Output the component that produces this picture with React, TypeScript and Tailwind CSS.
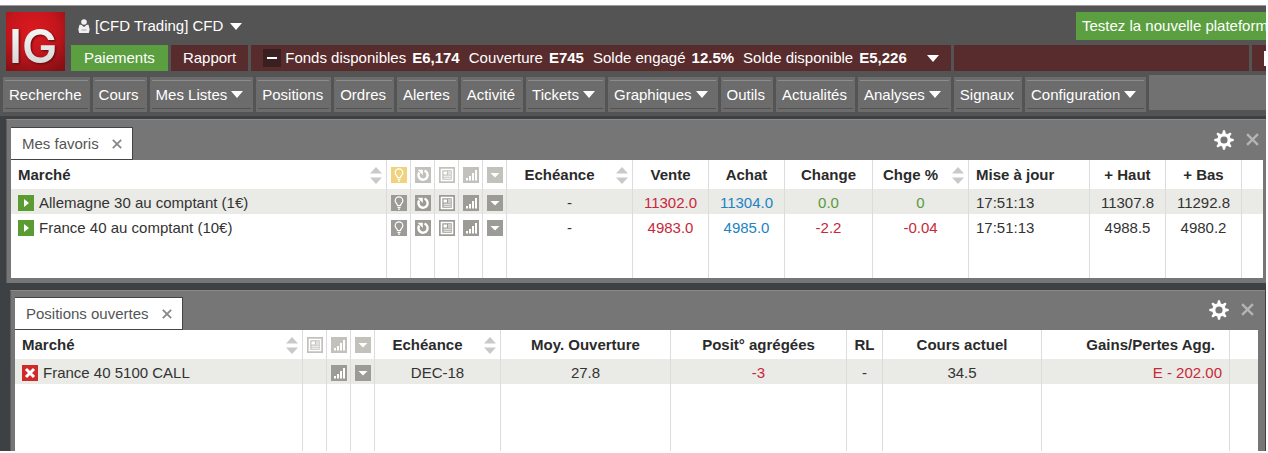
import type { ReactNode } from "react";
import clsx from "clsx";

type IconName = "bulb" | "alarm" | "news" | "chart" | "menu";

type Column = {
  key: string;
  width: string;
  label?: string;
  icon?: IconName;
  title?: string;
  sortable?: boolean;
  highlight?: boolean;
  align?: "left" | "right";
};

type Cell = { text: string; color?: string };

type Row = {
  name: string;
  status: "open" | "close";
  icons: IconName[];
  cells: Record<string, Cell>;
};

const RED = "text-[#c8283a]";
const BLUE = "text-[#1b84c4]";
const GREEN = "text-[#5b9a3b]";

const NAV = [
  { label: "Recherche" },
  { label: "Cours" },
  { label: "Mes Listes", menu: true },
  { label: "Positions" },
  { label: "Ordres" },
  { label: "Alertes" },
  { label: "Activité" },
  { label: "Tickets", menu: true },
  { label: "Graphiques", menu: true },
  { label: "Outils" },
  { label: "Actualités" },
  { label: "Analyses", menu: true },
  { label: "Signaux" },
  { label: "Configuration", menu: true },
];

const BALANCES = [
  { label: "Fonds disponibles", value: "E6,174" },
  { label: "Couverture", value: "E745" },
  { label: "Solde engagé", value: "12.5%" },
  { label: "Solde disponible", value: "E5,226" },
];

const FAVORITE_COLUMNS: Column[] = [
  { key: "name", width: "w-[376px]", label: "Marché", sortable: true, align: "left" },
  { key: "bulb", width: "w-6", icon: "bulb", title: "Signaux", highlight: true },
  { key: "alarm", width: "w-6", icon: "alarm", title: "Alertes" },
  { key: "news", width: "w-6", icon: "news", title: "Actualités" },
  { key: "chart", width: "w-6", icon: "chart", title: "Graphique" },
  { key: "menu", width: "w-6", icon: "menu", title: "Menu" },
  { key: "expiry", width: "w-[126px]", label: "Echéance", sortable: true },
  { key: "sell", width: "w-[76px]", label: "Vente" },
  { key: "buy", width: "w-[76px]", label: "Achat" },
  { key: "change", width: "w-[88px]", label: "Change" },
  { key: "percent", width: "w-24", label: "Chge %", sortable: true },
  { key: "updated", width: "w-[121px]", label: "Mise à jour", align: "left" },
  { key: "high", width: "w-[76px]", label: "+ Haut" },
  { key: "low", width: "w-[76px]", label: "+ Bas" },
  { key: "rest", width: "w-auto" },
];

const FAVORITES: Row[] = [
  {
    name: "Allemagne 30 au comptant (1€)",
    status: "open",
    icons: ["bulb", "alarm", "news", "chart", "menu"],
    cells: {
      expiry: { text: "-" },
      sell: { text: "11302.0", color: RED },
      buy: { text: "11304.0", color: BLUE },
      change: { text: "0.0", color: GREEN },
      percent: { text: "0", color: GREEN },
      updated: { text: "17:51:13" },
      high: { text: "11307.8" },
      low: { text: "11292.8" },
    },
  },
  {
    name: "France 40 au comptant (10€)",
    status: "open",
    icons: ["bulb", "alarm", "news", "chart", "menu"],
    cells: {
      expiry: { text: "-" },
      sell: { text: "4983.0", color: RED },
      buy: { text: "4985.0", color: BLUE },
      change: { text: "-2.2", color: RED },
      percent: { text: "-0.04", color: RED },
      updated: { text: "17:51:13" },
      high: { text: "4988.5" },
      low: { text: "4980.2" },
    },
  },
];

const POSITION_COLUMNS: Column[] = [
  { key: "name", width: "w-72", label: "Marché", sortable: true, align: "left" },
  { key: "news", width: "w-6", icon: "news", title: "Actualités" },
  { key: "chart", width: "w-6", icon: "chart", title: "Graphique" },
  { key: "menu", width: "w-6", icon: "menu", title: "Menu" },
  { key: "expiry", width: "w-[126px]", label: "Echéance", sortable: true },
  { key: "average", width: "w-[170px]", label: "Moy. Ouverture" },
  { key: "size", width: "w-44", label: "Posit° agrégées" },
  { key: "limit", width: "w-9", label: "RL" },
  { key: "price", width: "w-[159px]", label: "Cours actuel" },
  { key: "profit", width: "w-[188px]", label: "Gains/Pertes Agg.", align: "right" },
  { key: "rest", width: "w-auto" },
];

const POSITIONS: Row[] = [
  {
    name: "France 40 5100 CALL",
    status: "close",
    icons: ["chart", "menu"],
    cells: {
      expiry: { text: "DEC-18" },
      average: { text: "27.8" },
      size: { text: "-3", color: RED },
      limit: { text: "-" },
      price: { text: "34.5" },
      profit: { text: "E - 202.00", color: RED },
    },
  },
];

function Caret() {
  return (
    <svg width="12" height="7" viewBox="0 0 12 7" className="shrink-0" aria-hidden="true">
      <path d="M0 0h12L6 7z" fill="#fff" />
    </svg>
  );
}

function Logo() {
  return (
    <svg
      width="59"
      height="59"
      viewBox="0 0 59 59"
      className="shrink-0 overflow-visible"
      role="img"
      aria-label="IG"
    >
      <defs>
        <radialGradient id="logo-red" cx="0.45" cy="0.3" r="0.8">
          <stop offset="0" stopColor="#dc191f" />
          <stop offset="0.5" stopColor="#c5161d" />
          <stop offset="1" stopColor="#860f14" />
        </radialGradient>
        <linearGradient id="logo-silver" x1="0" y1="0" x2="0" y2="1">
          <stop offset="0" stopColor="#ffffff" />
          <stop offset="1" stopColor="#cfcfcf" />
        </linearGradient>
      </defs>
      <rect width="59" height="59" fill="url(#logo-red)" />
      <text
        x="3"
        y="51"
        fontFamily="Inter, sans-serif"
        fontSize="47"
        fontWeight="600"
        fill="url(#logo-silver)"
        className="drop-shadow-[1px_1px_1px_#5a0a0d]"
      >
        IG
      </text>
    </svg>
  );
}

function UserIcon() {
  return (
    <svg width="12" height="14" viewBox="0 0 12 14" className="shrink-0" aria-hidden="true">
      <circle cx="6" cy="3" r="2.8" fill="#f0f0f0" />
      <path d="M1.500 5.800h1.700L6 8l2.800-2.200h1.700L11.700 10.500 10.800 14H1.200L0.300 10.500z" fill="#f0f0f0" />
      <path d="M3.500 11h5" stroke="#a5a5a5" />
    </svg>
  );
}

function GearIcon() {
  return (
    <svg width="20" height="20" viewBox="0 0 20 20" aria-hidden="true">
      <circle cx="10" cy="10" r="5.2" fill="none" stroke="#fff" strokeWidth="3.2" />
      {[0, 45, 90, 135, 180, 225, 270, 315].map((angle) => (
        <path key={angle} d="M8 4.500L9 0.300h2L12 4.500z" fill="#fff" transform={`rotate(${angle} 10 10)`} />
      ))}
    </svg>
  );
}

function CrossIcon({ size, color }: { size: number; color: string }) {
  return (
    <svg width={size} height={size} viewBox="0 0 12 12" aria-hidden="true">
      <path d="M1 1l10 10M11 1L1 11" stroke={color} strokeWidth="2.2" />
    </svg>
  );
}

function SortIcon() {
  return (
    <svg width="12" height="17" viewBox="0 0 12 17" aria-hidden="true">
      <path d="M6 0l6 6.500H0zM0 10.500h12L6 17z" fill="#c9c9c9" />
    </svg>
  );
}

const GLYPHS: Record<IconName, ReactNode> = {
  bulb: (
    <g fill="none" stroke="#fff" strokeWidth="1.2">
      <path d="M6.500 10.500C6.500 8.500 4.200 8 4.200 5.700a3.800 3.800 0 0 1 7.600 0C11.800 8 9.500 8.500 9.500 10.500z" />
      <path d="M6.500 12.300h3M7 14.200h2" />
    </g>
  ),
  alarm: (
    <g>
      <path d="M9.500 3.700A4.600 4.600 0 1 1 4.200 5.500" fill="none" stroke="#fff" strokeWidth="2.4" />
      <path d="M2.500 2.800h5.300v5.200z" fill="#fff" />
    </g>
  ),
  news: (
    <g>
      <path d="M2.500 2.500h11v11h-11z" fill="none" stroke="#fff" strokeWidth="1.6" />
      <path d="M4.500 4.500h3.500v3H4.500z" fill="#fff" />
      <path d="M9 5h3M9 7h3M4.500 9.200h7.500M4.500 11.200h7.500" stroke="#fff" />
    </g>
  ),
  chart: (
    <path d="M3 11h2v2.500H3zM6 9h2v4.500H6zM9 6h2v7.500H9zM12 3h2v10.500h-2z" fill="#fff" />
  ),
  menu: <path d="M3.500 6h9L8 10.500z" fill="#fff" />,
};

function Tile({ icon, color }: { icon: IconName; color: string }) {
  return (
    <svg width="16" height="16" viewBox="0 0 16 16" className="block" aria-hidden="true">
      <rect width="16" height="16" fill={color} />
      {GLYPHS[icon]}
    </svg>
  );
}

function StatusIcon({ status }: { status: Row["status"] }) {
  return (
    <svg width="16" height="16" viewBox="0 0 16 16" className="shrink-0" aria-hidden="true">
      <rect width="16" height="16" fill={status === "open" ? "#5b9c32" : "#cf2a2a"} />
      {status === "open" ? (
        <path d="M6 4l5 4-5 4z" fill="#fff" />
      ) : (
        <path d="M4 4l8 8M12 4l-8 8" stroke="#fff" strokeWidth="3" />
      )}
    </svg>
  );
}

function MarketTable({
  label,
  columns,
  rows,
  filler,
}: {
  label: string;
  columns: Column[];
  rows: Row[];
  filler: string;
}) {
  return (
    <table aria-label={label} className="w-full table-fixed border-separate border-spacing-0 bg-white">
      <thead>
        <tr className="h-[29px]">
          {columns.map((col) => (
            <th
              key={col.key}
              className={clsx(
                "p-0 font-bold text-[#2b2b2b]",
                col.width,
                col.key !== "rest" && "border-r border-[#dcdcdc]",
              )}
            >
              {col.icon && (
                <button type="button" aria-label={col.title} className="ml-1 block pt-px">
                  <Tile icon={col.icon} color={col.highlight ? "#efd37f" : "#c2c1bc"} />
                </button>
              )}
              {col.label && (
                <div
                  className={clsx(
                    "flex items-center",
                    col.align === "right" && "justify-end pr-3.5",
                    !col.align && !col.sortable && "justify-center",
                    col.align === "left" && "pl-[7px]",
                  )}
                >
                  <span className={clsx(col.sortable && "flex-1", col.align === "left" ? "text-left" : "text-center")}>
                    {col.label}
                  </span>
                  {col.sortable && (
                    <button type="button" aria-label={`Trier par ${col.label}`} className="mr-1 pl-1 pt-0.5">
                      <SortIcon />
                    </button>
                  )}
                </div>
              )}
            </th>
          ))}
        </tr>
      </thead>
      <tbody>
        {rows.map((row) => (
          <tr key={row.name} className="h-[25px] text-[#333] odd:bg-[#eaeae6]">
            {columns.map((col) => {
              const cell = row.cells[col.key];
              return (
                <td
                  key={col.key}
                  className={clsx(
                    "px-0 pt-0.5 pb-0",
                    col.key !== "rest" && "border-r border-[#dcdcdc]",
                    !col.align && "text-center",
                    col.align === "left" && "pl-[7px]",
                    col.align === "right" && "pr-[7px] text-right",
                    cell?.color,
                  )}
                >
                  {col.key === "name" && (
                    <div className="flex items-center gap-[5px]">
                      <StatusIcon status={row.status} />
                      {row.name}
                    </div>
                  )}
                  {col.icon && row.icons.includes(col.icon) && (
                    <button type="button" aria-label={`${col.title} ${row.name}`} className="ml-1 block">
                      <Tile icon={col.icon} color="#9d9b95" />
                    </button>
                  )}
                  {cell?.text}
                </td>
              );
            })}
          </tr>
        ))}
        <tr className={filler} aria-hidden="true">
          {columns.map((col) => (
            <td key={col.key} className={clsx("p-0", col.key !== "rest" && "border-r border-[#dcdcdc]")} />
          ))}
        </tr>
      </tbody>
    </table>
  );
}

function Panel({ title, className, children }: { title: string; className: string; children: ReactNode }) {
  return (
    <section className={clsx("border-t border-l border-t-[#8a8a8a] border-l-[#5c5c5c] bg-[#767676]", className)}>
      <div className="flex items-center">
        <div className="flex h-[33px] items-center gap-[13px] border-y border-r border-[#444] bg-white pr-2.5 pl-[11px] text-[#555]">
          <h2>{title}</h2>
          <button type="button" aria-label={`Fermer ${title}`}>
            <CrossIcon size={10} color="#888" />
          </button>
        </div>
        <div className="mb-2 ml-auto flex items-center gap-3 pr-1">
          <button type="button" aria-label={`Réglages ${title}`}>
            <GearIcon />
          </button>
          <button type="button" aria-label={`Fermer le panneau ${title}`}>
            <CrossIcon size={13} color="#b4b4b4" />
          </button>
        </div>
      </div>
      {children}
    </section>
  );
}

export default function App() {
  return (
    <div className="overflow-hidden bg-white pt-[5px] pr-0.5 pb-0.5 font-['Liberation_Sans',Arial,sans-serif] text-[15px] leading-5">
      <div className="border-t border-[#999] bg-[#3d4143]">
        <header className="bg-[#545454] pb-1">
          <div className="flex gap-1.5 pt-1.5 pb-1 pl-1.5">
            <Logo />
            <div className="flex min-w-0 flex-1 flex-col gap-[5px] text-white">
              <div className="flex h-7 items-center">
                <button type="button" className="flex items-center gap-[5px] pl-[7px]">
                  <UserIcon />
                  <span>[CFD Trading] CFD</span>
                  <span className="pl-0.5">
                    <Caret />
                  </span>
                </button>
                <a
                  href="#plateforme"
                  className="ml-auto flex h-7 w-[190px] shrink-0 items-center overflow-hidden bg-[#5c9f41] pl-1.5 whitespace-nowrap"
                >
                  Testez la nouvelle plateforme
                </a>
              </div>
              <div className="flex h-[26px] gap-[3px]">
                <button type="button" className="bg-[#5c9f41] px-[13px]">
                  Paiements
                </button>
                <button type="button" className="bg-[#582c2d] px-3">
                  Rapport
                </button>
                <div className="flex items-center bg-[#582c2d] px-3">
                  <button
                    type="button"
                    aria-label="Réduire"
                    className="mr-1 flex size-[18px] items-center justify-center bg-[#3a1f20]"
                  >
                    <span className="h-0.5 w-2.5 bg-white" />
                  </button>
                  <dl className="flex gap-[9px] whitespace-nowrap">
                    {BALANCES.map((item) => (
                      <div key={item.label} className="flex gap-1.5">
                        <dt>{item.label}</dt>
                        <dd className="font-bold">{item.value}</dd>
                      </div>
                    ))}
                  </dl>
                  <button type="button" aria-label="Détails du solde" className="ml-5">
                    <Caret />
                  </button>
                </div>
                <div className="flex-1 bg-[#582c2d]" />
                <div className="flex w-3.5 items-center justify-end bg-[#582c2d]">
                  <span className="h-[15px] w-0.5 bg-white" />
                </div>
              </div>
            </div>
          </div>
          <nav className="flex gap-[3px] pl-[3px]">
            {NAV.map((item) => (
              <button
                key={item.label}
                type="button"
                className="mt-0.5 h-[35px] bg-[#6c6c6c] px-0.5 py-[3px] text-white"
              >
                <span
                  className={clsx(
                    "flex h-full items-center border-t border-b border-t-[#8c8c8c] border-b-[#525252] pl-1 whitespace-nowrap",
                    item.menu ? "gap-1 pr-2" : "pr-1.5",
                  )}
                >
                  {item.label}
                  {item.menu && <Caret />}
                </span>
              </button>
            ))}
            <div className="mb-0.5 flex-1 bg-[#717171]" />
          </nav>
        </header>
        <main className="flex flex-col gap-[7px] pt-[3px]">
          <Panel title="Mes favoris" className="ml-1.5 pt-[7px] pr-[3px] pb-[5px] pl-1">
            <MarketTable label="Mes favoris" columns={FAVORITE_COLUMNS} rows={FAVORITES} filler="h-[39px]" />
          </Panel>
          <Panel title="Positions ouvertes" className="mr-px ml-2.5 pt-1.5 pr-[7px] pl-1">
            <MarketTable label="Positions ouvertes" columns={POSITION_COLUMNS} rows={POSITIONS} filler="h-[67px]" />
          </Panel>
        </main>
      </div>
    </div>
  );
}
